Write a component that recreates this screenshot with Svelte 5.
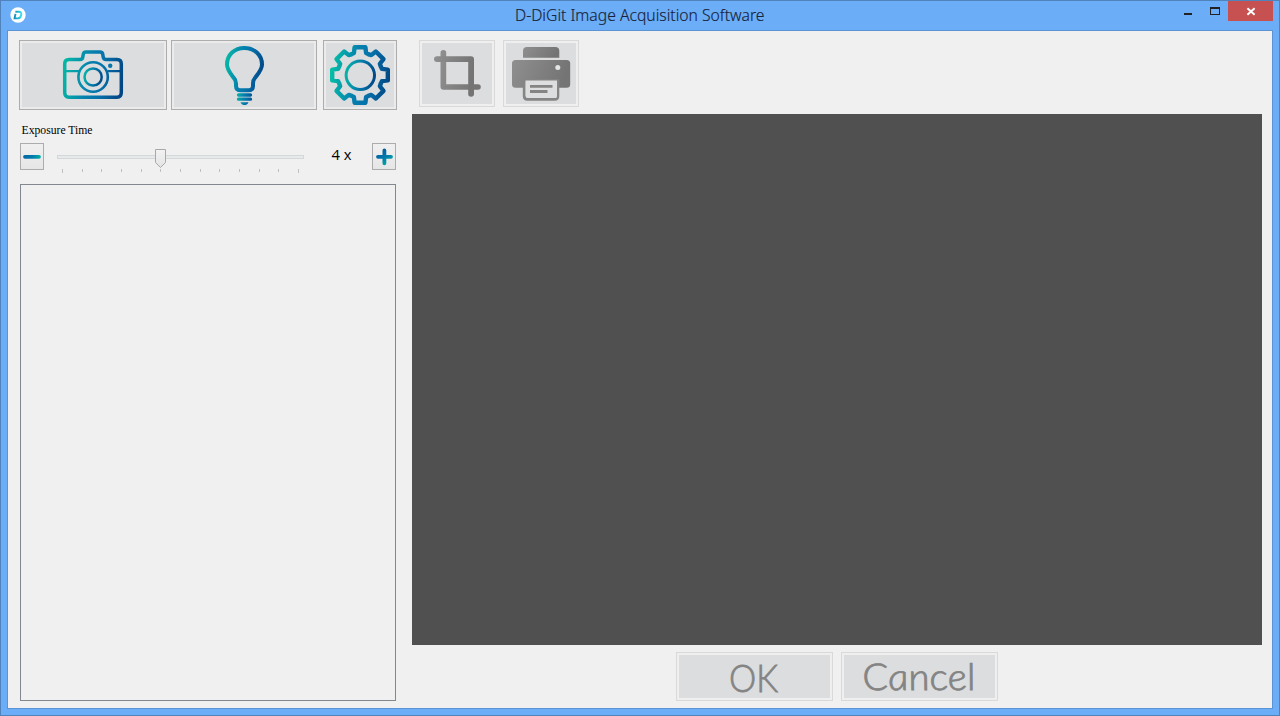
<script>
  const ticks = [62, 82, 101, 121, 141, 160, 180, 200, 219, 239, 259, 278, 298];

  // Outline of the eight-toothed gear, centred on the origin.
  const tooth = [[-8.9, -20.6], [-6.1, -22], [-5.4, -27.8], [5.4, -27.8], [6.1, -22], [8.9, -20.6]];
  const points = [];
  for (let i = 0; i < 8; i++) {
    const a = (i * Math.PI) / 4;
    for (const [x, y] of tooth) {
      points.push(
        `${(x * Math.cos(a) - y * Math.sin(a)).toFixed(2)} ${(x * Math.sin(a) + y * Math.cos(a)).toFixed(2)}`
      );
    }
  }
  const gear = 'M' + points.join('L') + 'Z';
</script>

<div class="window">
  <header>
    <svg class="logo" viewBox="0 0 16 16">
      <defs>
        <linearGradient id="logoFill" x1="0" x2="1"><stop stop-color="#168fb8" /><stop offset="1" stop-color="#35e0ee" /></linearGradient>
      </defs>
      <circle cx="8" cy="8" r="7.7" fill="#fff" />
      <path d="M5.4 4.7H9.2Q11.8 4.9 11.2 8Q10.6 11.4 7.7 11.4H4.6L5.5 6.9" fill="none" stroke="url(#logoFill)" stroke-width="1.9" />
    </svg>
    <svg class="title" viewBox="0 0 260 30">
      <text x="5" y="20" textLength="249.5" lengthAdjust="spacingAndGlyphs">D-DiGit Image Acquisition Software</text>
    </svg>
    <div class="controls">
      <svg class="glyphs" viewBox="0 0 48 21" shape-rendering="crispEdges">
        <rect x="4" y="12" width="8" height="2" fill="#222" />
        <path d="M30 6H40V14H30ZM31 8V13H39V8Z" fill="#222" fill-rule="evenodd" />
      </svg>
      <div class="close">
        <svg viewBox="0 0 45 20"><path d="M19.4 7.2L26.6 13.8M26.6 7.2L19.4 13.8" stroke="#fff" stroke-width="1.9" /></svg>
      </div>
    </div>
  </header>

  <main>
    <aside>
      <div class="tools">
        <button class="tile">
          <svg viewBox="19 40 148 70">
            <defs>
              <linearGradient id="cam" gradientUnits="userSpaceOnUse" x1="63" y1="70" x2="123" y2="80"><stop stop-color="#06b8a6" /><stop offset=".42" stop-color="#0581ae" /><stop offset=".65" stop-color="#0671aa" /><stop offset="1" stop-color="#014584" /></linearGradient>
              <linearGradient id="lens" gradientUnits="userSpaceOnUse" x1="83" y1="75" x2="103" y2="79"><stop stop-color="#06b8a6" /><stop offset=".5" stop-color="#0579ac" /><stop offset="1" stop-color="#014584" /></linearGradient>
            </defs>
            <g fill="none" stroke="url(#cam)" stroke-width="3.5">
              <path d="M69 59.5H80Q82.5 59.5 82.8 57L83.3 54Q83.7 52 86 52H100Q102.2 52 102.7 54L103.2 57Q103.6 59.5 106 59.5H117Q121.3 59.5 121.3 64V92.5Q121.3 97.2 117 97.2H69Q64.7 97.2 64.7 92.5V64Q64.7 59.5 69 59.5Z" />
              <path d="M64.6 71.1H79M107.5 71.1H121.4" stroke-width="2.4" />
              <circle cx="93.1" cy="77" r="14.7" stroke-width="2.6" />
            </g>
            <circle cx="93.1" cy="77" r="8.6" fill="none" stroke="url(#lens)" stroke-width="2.5" />
            <circle cx="110.2" cy="65.8" r="2.2" fill="#0876ab" />
          </svg>
        </button>
        <button class="tile">
          <svg viewBox="171 40 146 70">
            <defs>
              <linearGradient id="bulb" gradientUnits="userSpaceOnUse" x1="225" y1="65" x2="264" y2="71"><stop stop-color="#06b8a6" /><stop offset=".4" stop-color="#0581ae" /><stop offset=".62" stop-color="#0671aa" /><stop offset="1" stop-color="#014584" /></linearGradient>
              <linearGradient id="base" gradientUnits="userSpaceOnUse" x1="236" y1="95" x2="253" y2="96"><stop stop-color="#06b8a6" /><stop offset=".5" stop-color="#057cad" /><stop offset="1" stop-color="#025392" /></linearGradient>
            </defs>
            <path d="M241 90.3Q236 90.3 236 86V83.5Q236 80 233.5 77.5C230 73 227 69.5 227 64.5C227 54.8 234.6 47.9 244.3 47.9C254 47.9 262 54.8 262 64.5C262 69.5 258.8 73 255.2 77.5Q253 80 253 83.5V86Q253 90.3 248 90.3Z" fill="none" stroke="url(#bulb)" stroke-width="4" />
            <path d="M238.5 95H250.5M238.5 99.2L250.5 99.21" stroke="url(#base)" stroke-width="3.3" stroke-linecap="round" fill="none" />
            <path d="M240.5 102.2H248.5Q247.5 105 244.5 105Q241.5 105 240.5 102.2Z" fill="url(#base)" />
          </svg>
        </button>
        <button class="tile">
          <svg viewBox="323 40 74 70">
            <defs>
              <linearGradient id="cog" gradientUnits="userSpaceOnUse" x1="-30" y1="-4" x2="30" y2="4"><stop stop-color="#06c0a6" /><stop offset=".42" stop-color="#0581ae" /><stop offset=".65" stop-color="#0671aa" /><stop offset="1" stop-color="#014584" /></linearGradient>
              <linearGradient id="hub" gradientUnits="userSpaceOnUse" x1="-16" y1="-2" x2="16" y2="2"><stop stop-color="#06b8a6" /><stop offset=".5" stop-color="#057cad" /><stop offset="1" stop-color="#014584" /></linearGradient>
            </defs>
            <g transform="translate(360 75)" fill="none" stroke-linejoin="round">
              <path d={gear} stroke="url(#cog)" stroke-width="4.4" />
              <circle cx="0.3" cy="0.3" r="14.2" stroke="url(#hub)" stroke-width="3" />
            </g>
          </svg>
        </button>
      </div>

      <svg class="label" viewBox="0 0 80 16"><text x="1.5" y="12" textLength="71" lengthAdjust="spacingAndGlyphs">Exposure Time</text></svg>

      <div class="exposure">
        <button class="step">
          <svg viewBox="0 0 24 27">
            <defs><linearGradient id="minus" gradientUnits="userSpaceOnUse" x1="3" y1="12" x2="21" y2="15"><stop stop-color="#0067a5" /><stop offset=".5" stop-color="#0078aa" /><stop offset="1" stop-color="#00b3a3" /></linearGradient></defs>
            <path d="M5 13.8L19 13.81" stroke="url(#minus)" stroke-width="3.8" stroke-linecap="round" />
          </svg>
        </button>
        <svg class="slider" viewBox="44 143 270 34">
          <defs><linearGradient id="thumb" x2="0" y2="1"><stop stop-color="#f2f2f2" /><stop offset="1" stop-color="#e4e4e4" /></linearGradient></defs>
          <rect x="57.5" y="155.5" width="246" height="3" fill="#e7eaea" stroke="#d4d8d8" />
          <path d="M155.5 149.5H165.5V162.5L160.5 167.5L155.5 162.5Z" fill="url(#thumb)" stroke="#a8a8a8" />
          {#each ticks as x, i}
            <rect {x} y="169" width="1" height={i === 0 || i === ticks.length - 1 ? 4 : 3} fill="#c0c0c0" />
          {/each}
        </svg>
        <svg class="value" viewBox="0 0 58 27"><text x="17.5" y="17" textLength="20" lengthAdjust="spacingAndGlyphs">4 x</text></svg>
        <button class="step">
          <svg viewBox="0 0 24 27">
            <defs><linearGradient id="plus" gradientUnits="userSpaceOnUse" x1="8" y1="7" x2="18" y2="21"><stop stop-color="#005ca0" /><stop offset=".5" stop-color="#007aab" /><stop offset="1" stop-color="#00b3a3" /></linearGradient></defs>
            <path d="M6 13.8H19M12.4 7.5V20.3" stroke="url(#plus)" stroke-width="3.8" stroke-linecap="round" />
          </svg>
        </button>
      </div>

      <div class="list"></div>
    </aside>

    <section>
      <div class="actions">
        <button class="tile off">
          <svg viewBox="419 40 76 67">
            <defs><linearGradient id="grey" x1="0" y1="0" x2="1" y2=".2"><stop stop-color="#8f8f8f" /><stop offset="1" stop-color="#747474" /></linearGradient></defs>
            <path d="M440.5 52.5Q440.5 50 443.4 50Q446.2 50 446.2 52.5V84.2H478Q480.8 84.2 480.8 87Q480.8 89.8 478 89.8H443.5Q440.5 89.8 440.5 86.5Z" fill="url(#grey)" />
            <path d="M437 56.2H471Q474 56.2 474 59.5V94Q474 96.7 471.1 96.7Q468.2 96.7 468.2 94V62H437Q434 62 434 59.1Q434 56.2 437 56.2Z" fill="url(#grey)" />
          </svg>
        </button>
        <button class="tile off">
          <svg viewBox="503 40 76 67">
            <path d="M523 57.8V51Q523 47 527 47H555.3Q559.3 47 559.3 51V57.8Z" fill="url(#grey)" />
            <rect x="512" y="60" width="58.2" height="27.8" rx="3.5" fill="url(#grey)" />
            <circle cx="557.8" cy="67.6" r="2.5" fill="#e4e5e6" />
            <path d="M524.3 80.7H557.8V96Q557.8 99.2 554.8 99.2H527.3Q524.3 99.2 524.3 96Z" fill="#dcddde" stroke="#858585" stroke-width="3" />
            <path d="M525.5 80.5H557V96.5Q557 98 555 98H528Q525.5 98 525.5 96Z" fill="#dddedf" />
            <path d="M530 86.4H552.5M530 91.5H547.5" stroke="#848484" stroke-width="2.8" />
          </svg>
        </button>
      </div>
      <div class="preview"></div>
      <footer>
        <button class="tile off">
          <svg viewBox="676 652 157 49"><text class="big" x="729" y="691.7" textLength="49" lengthAdjust="spacingAndGlyphs">OK</text></svg>
        </button>
        <button class="tile off">
          <svg viewBox="841 652 157 49"><text class="big upright" transform="translate(864 690.2) skewX(8)" textLength="113" lengthAdjust="spacingAndGlyphs">Cancel</text></svg>
        </button>
      </footer>
    </section>
  </main>
</div>

<style>
  :global(body) { margin: 0; overflow: hidden; }
  * { box-sizing: border-box; }
  svg { display: block; }
  .window {
    width: 1280px; height: 716px; display: flex; flex-direction: column;
    background: #6badf6; border: 1px solid #5083bc; padding: 0 6px 6px;
  }
  header { height: 29px; flex: none; display: grid; grid-template-columns: 503px 260px 1fr; }
  .logo { width: 16px; height: 16px; margin: 6px 0 0 3px; }
  .title { width: 260px; height: 30px; }
  .title text { font: 300 15.5px "Noto Sans", "Open Sans", sans-serif; fill: #17233a; stroke: #17233a; stroke-width: .15; }
  .controls { display: flex; justify-content: flex-end; }
  .glyphs { width: 48px; height: 21px; }
  .close { width: 45px; height: 20px; background: #c75050; }
  main {
    flex: 1; display: flex; background: #f0f0f0; border: 1px solid #5b93d3;
    padding: 9px 10px 7px 11px; gap: 15px;
  }
  aside { width: 378px; flex: none; display: flex; flex-direction: column; }
  .tools { display: grid; grid-template-columns: 148px 146px 74px; column-gap: 4px; height: 70px; }
  .tools .tile:last-child { margin-left: 2px; width: 74px; }
  button { margin: 0; padding: 0; appearance: none; border-radius: 0; overflow: hidden; }
  .tile { border: 1px solid #adadad; background: #dcddde; box-shadow: inset 0 0 0 2px #ebebeb; }
  .tile.off { border-color: #d9d9d9; box-shadow: inset 0 0 0 2px #efefef; }
  .tile svg { width: calc(100% + 2px); height: calc(100% + 2px); margin: -1px; }
  .label { width: 80px; height: 16px; margin: 12px 0 5px 1px; }
  .label text { font: 12px "Liberation Serif", serif; fill: #000; }
  .exposure { height: 27px; display: flex; margin-left: 1px; width: 376px; }
  .step { width: 24px; height: 27px; border: 1px solid #acacac; background: linear-gradient(#f0f0f0, #e6e6e6); flex: none; }
  .step svg { width: 24px; height: 27px; margin: -1px; }
  .slider { width: 270px; height: 34px; flex: none; }
  .value { width: 58px; height: 27px; flex: none; }
  .value text { font: 15px "Open Sans", "Noto Sans", sans-serif; fill: #000; }
  .list { flex: 1; margin: 14px 1px 0; border: 1px solid #828790; }
  section { width: 850px; display: flex; flex-direction: column; }
  .actions { height: 67px; display: flex; gap: 8px; padding-left: 7px; }
  .actions .tile { width: 76px; }
  .preview { height: 531px; margin-top: 7px; background: #505050; }
  footer { height: 49px; margin-top: 7px; display: flex; justify-content: center; gap: 8px; }
  footer .tile { width: 157px; }
  .big { font: 300 37px Lato, "Open Sans", sans-serif; fill: #848484; stroke: #848484; stroke-width: .8; }
  .upright { font-style: italic; }
</style>
